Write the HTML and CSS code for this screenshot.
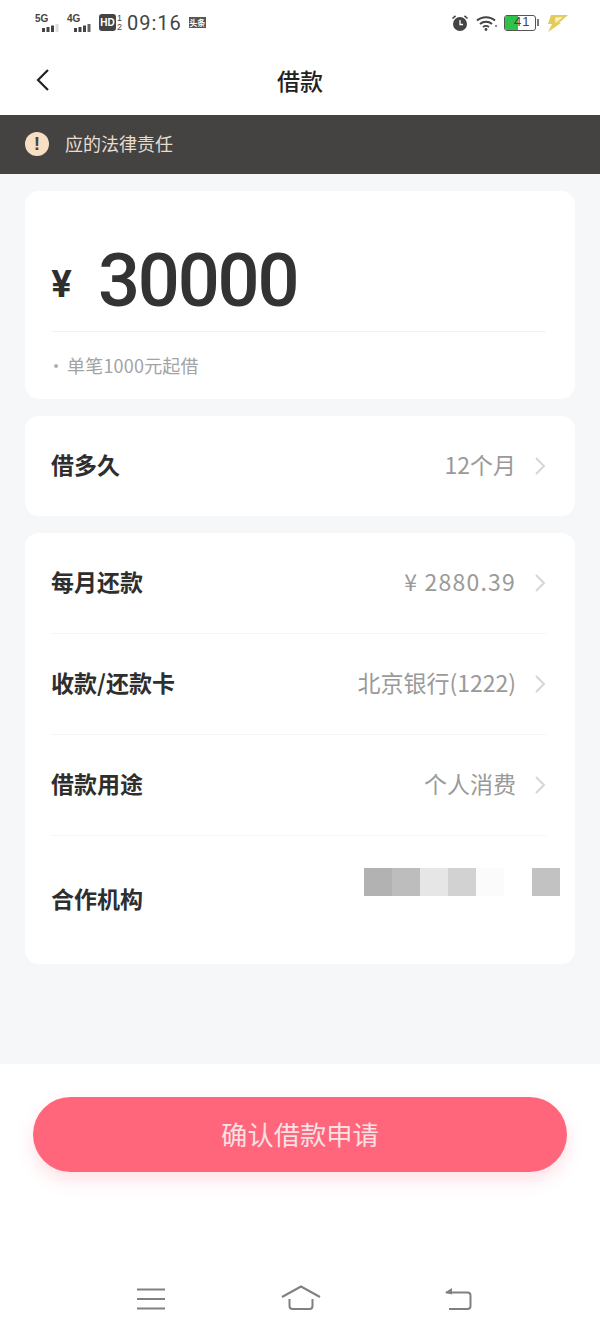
FILE: index.html
```html
<!DOCTYPE html>
<html lang="zh-CN">
<head>
    <meta charset="UTF-8">
    <meta name="viewport" content="width=device-width, initial-scale=1.0">
    <title>借款</title>
    <link rel="stylesheet" href="styles.css">
</head>
<body>

<div class="page">
    <!-- Status bar -->
    <div class="status-bar">
        <div class="status-left">
            <div class="signal">
                <span class="signal-name">5G</span>
                <svg width="20" height="8" viewBox="0 0 20 8"><rect x="1" y="4" width="3" height="4" fill="#444"/><rect x="5.5" y="3" width="3" height="5" fill="#444"/><rect x="10" y="1.5" width="3" height="6.5" fill="#444"/><rect x="14.5" y="0" width="3" height="8" fill="#ddd"/></svg>
            </div>
            <div class="signal">
                <span class="signal-name">4G</span>
                <svg width="20" height="8" viewBox="0 0 20 8"><rect x="1" y="4" width="3" height="4" fill="#444"/><rect x="5.5" y="3" width="3" height="5" fill="#444"/><rect x="10" y="1.5" width="3" height="6.5" fill="#444"/><rect x="14.5" y="0" width="3" height="8" fill="#666"/></svg>
            </div>
            <span class="hd-badge">HD</span>
            <span class="hd-nums"><span>1</span><span>2</span></span>
            <span class="clock">09:16</span>
            <span class="app-badge">头条</span>
        </div>
        <div class="status-right">
            <svg width="18" height="18" viewBox="0 0 18 18">
                <path d="M1.5 4.5 L4.5 1.8 M16.5 4.5 L13.5 1.8" stroke="#444" stroke-width="1.6" fill="none"/>
                <circle cx="9" cy="10" r="7" fill="#444"/>
                <path d="M9 6 V10.5 H12" stroke="#fff" stroke-width="1.3" fill="none"/>
            </svg>
            <svg class="wifi" width="21" height="16" viewBox="0 0 21 16">
                <path d="M1 5.5 C6 1 14 1 19 5.5" stroke="#444" stroke-width="2" fill="none"/>
                <path d="M4 9 C7.5 6 12.5 6 16 9" stroke="#444" stroke-width="2" fill="none"/>
                <path d="M7 12 C9 10.5 11 10.5 13 12" stroke="#444" stroke-width="1.8" fill="none"/>
                <circle cx="10" cy="14.5" r="1.4" fill="#444"/>
                <circle cx="20" cy="11" r="1" fill="#666"/>
            </svg>
            <div class="battery">
                <div class="battery-body">
                    <div class="battery-level"></div>
                    <span class="battery-num">41</span>
                </div>
                <div class="battery-cap"></div>
            </div>
            <svg width="22" height="18" viewBox="0 0 22 18">
                <path d="M5 1 H22 L13 9 H15 L2 18 L6 10 H2 Z" fill="#e2cb58"/>
                <path d="M9 3.5 L17 3 L9.5 9 Z" fill="#fbf3c4"/>
            </svg>
        </div>
    </div>

    <!-- Title -->
    <div class="nav-bar">
        <svg class="nav-back" width="14" height="24" viewBox="0 0 14 24">
            <path d="M12 2 L2 12 L12 22" stroke="#222" stroke-width="2.2" fill="none"/>
        </svg>
        <h1 class="nav-title">借款</h1>
    </div>

    <!-- Notice -->
    <div class="notice">
        <span class="notice-icon">!</span>
        <span class="notice-text">应的法律责任</span>
    </div>

    <div class="content">
        <div class="card amount-card">
            <div class="amount-line">
                <span class="amount-sign">¥</span>
                <span class="amount-value">30000</span>
            </div>
            <div class="amount-tip"><span class="tip-dot">·</span>单笔1000元起借</div>
        </div>

        <div class="card">
            <div class="row">
                <span class="row-label">借多久</span>
                <span class="row-value">12个月</span>
                <svg class="chevron" width="12" height="20" viewBox="0 0 12 20"><path d="M2 2 L10 10 L2 18" stroke="#d6d6d6" stroke-width="2" fill="none"/></svg>
            </div>
        </div>

        <div class="card">
            <div class="row row-line">
                <span class="row-label">每月还款</span>
                <span class="row-value money">¥ 2880.39</span>
                <svg class="chevron" width="12" height="20" viewBox="0 0 12 20"><path d="M2 2 L10 10 L2 18" stroke="#d6d6d6" stroke-width="2" fill="none"/></svg>
            </div>
            <div class="row row-line">
                <span class="row-label">收款/还款卡</span>
                <span class="row-value">北京银行(1222)</span>
                <svg class="chevron" width="12" height="20" viewBox="0 0 12 20"><path d="M2 2 L10 10 L2 18" stroke="#d6d6d6" stroke-width="2" fill="none"/></svg>
            </div>
            <div class="row row-line">
                <span class="row-label">借款用途</span>
                <span class="row-value">个人消费</span>
                <svg class="chevron" width="12" height="20" viewBox="0 0 12 20"><path d="M2 2 L10 10 L2 18" stroke="#d6d6d6" stroke-width="2" fill="none"/></svg>
            </div>
            <div class="row row-last">
                <span class="row-label">合作机构</span>
                <div class="mosaic">
                    <span class="m1"></span><span class="m2"></span><span class="m3"></span><span class="m4"></span><span class="m5"></span><span class="m6"></span><span class="m7"></span>
                </div>
            </div>
        </div>
    </div>

    <div class="footer">
        <button type="button" class="confirm-btn">确认借款申请</button>
    </div>

    <!-- Navigation keys -->
    <div class="keys">
        <svg width="30" height="24" viewBox="0 0 30 24">
            <path d="M1 2.5 H29 M1 12 H29 M1 21.5 H29" stroke="#808080" stroke-width="2" fill="none"/>
        </svg>
        <svg class="key-home" width="40" height="26" viewBox="0 0 40 26">
            <path d="M1 12 L20 1.5 L39 12" stroke="#808080" stroke-width="2" fill="none"/>
            <path d="M8.5 14 V21 Q8.5 24 11.5 24 H28.5 Q31.5 24 31.5 21 V14" stroke="#808080" stroke-width="2" fill="none"/>
        </svg>
        <svg class="key-back" width="30" height="24" viewBox="0 0 30 24">
            <path d="M3 5.5 H24.5 Q27.5 5.5 27.5 8.5 V19 Q27.5 22 24.5 22 H6" stroke="#808080" stroke-width="2" fill="none"/>
            <path d="M9 1 L2 5.5 L9 7.5 Z" fill="#808080"/>
        </svg>
    </div>
</div>

</body>
</html>
```

FILE: styles.css
```css
* {
    box-sizing: border-box;
}

body {
    margin: 0;
    background: #fff;
    font-family: "Noto Sans CJK SC", "Noto Sans", sans-serif;
    color: #333;
}

.page {
    width: 600px;
    height: 1333px;
    display: flex;
    flex-direction: column;
    overflow: hidden;
}

/* Status bar */
.status-bar {
    height: 47px;
    padding: 0 32px 2px 35px;
    display: flex;
    justify-content: space-between;
    align-items: center;
}

.status-left,
.status-right {
    display: flex;
    align-items: center;
}

.signal {
    width: 32px;
    display: flex;
    flex-direction: column;
    font-family: "Liberation Sans", sans-serif;
    font-size: 10px;
    font-weight: bold;
    line-height: 10px;
    color: #444;
}

.signal svg {
    margin-left: 6px;
}

.hd-badge {
    width: 17px;
    height: 17px;
    background: #444;
    border-radius: 3px;
    color: #fff;
    font-family: "Liberation Sans", sans-serif;
    font-size: 10px;
    font-weight: bold;
    line-height: 17px;
    text-align: center;
}

.hd-nums {
    width: 7px;
    margin-left: 1px;
    display: flex;
    flex-direction: column;
    font-family: "Liberation Sans", sans-serif;
    font-size: 9px;
    line-height: 9px;
    color: #444;
}

.clock {
    margin-left: 3px;
    font-family: "Roboto", sans-serif;
    font-size: 20px;
    letter-spacing: 1px;
    color: #444;
}

.app-badge {
    width: 17px;
    height: 11px;
    margin-left: 7px;
    background: #555;
    color: #fff;
    font-size: 8px;
    font-weight: 700;
    line-height: 11px;
    text-align: center;
    white-space: nowrap;
    overflow: hidden;
}

.status-right {
    gap: 7px;
}

.battery {
    display: flex;
    align-items: center;
}

.battery-body {
    width: 32px;
    height: 16px;
    border: 1.5px solid #555;
    border-radius: 3px;
    display: flex;
    position: relative;
    overflow: hidden;
}

.battery-level {
    width: 13px;
    background: #2fc24a;
}

.battery-num {
    position: absolute;
    left: 9px;
    top: -2px;
    font-family: "Liberation Sans", sans-serif;
    font-size: 13px;
    line-height: 16px;
    letter-spacing: 1px;
    color: #444;
}

.battery-cap {
    width: 2px;
    height: 7px;
    margin-left: 1px;
    background: #777;
}

/* Title */
.nav-bar {
    height: 68px;
    padding-bottom: 3px;
    position: relative;
    display: flex;
    justify-content: center;
    align-items: center;
}

.nav-back {
    position: absolute;
    left: 36px;
    top: 21px;
}

.nav-title {
    margin: 0;
    font-size: 23px;
    font-weight: 500;
    color: #222;
}

/* Notice */
.notice {
    height: 59px;
    padding: 0 0 2px 25px;
    background: #444342;
    display: flex;
    align-items: center;
}

.notice-icon {
    width: 24px;
    height: 24px;
    border-radius: 50%;
    background: #f8dfc4;
    color: #4a4440;
    font-family: "Liberation Sans", sans-serif;
    font-size: 19px;
    font-weight: bold;
    line-height: 24px;
    text-align: center;
}

.notice-text {
    margin: 0 0 2px 16px;
    font-size: 18px;
    color: #e6dccf;
}

/* Cards */
.content {
    height: 890px;
    padding: 17px 25px 0;
    background: #f6f7f9;
    display: flex;
    flex-direction: column;
    gap: 17px;
}

.card {
    background: #fff;
    border-radius: 14px;
    padding: 0 29px 0 26px;
}

.amount-card {
    height: 208px;
}

.amount-line {
    height: 141px;
    padding-top: 38px;
    border-bottom: 1px solid #f3f3f3;
    display: flex;
    align-items: center;
}

.amount-sign {
    width: 47px;
    margin-top: 6px;
    font-family: "Inter", sans-serif;
    font-size: 37px;
    font-weight: 700;
    color: #2e2e2e;
}

.amount-value {
    font-family: "Roboto", sans-serif;
    font-size: 74px;
    font-weight: 500;
    letter-spacing: -2.2px;
    color: #333;
}

.amount-tip {
    margin-top: 20px;
    font-size: 18px;
    line-height: 26px;
    letter-spacing: 0.2px;
    color: #a3a3a3;
}

.tip-dot {
    width: 16px;
    margin-left: -4px;
    padding-right: 4px;
    display: inline-block;
    box-sizing: content-box;
    color: #aaa;
}

.row {
    height: 100px;
    display: flex;
    align-items: center;
}

.row-line {
    height: 101px;
    border-bottom: 1px solid #f5f5f5;
}

.row-last {
    height: 128px;
    border-bottom: 0;
}

.row-label {
    flex: 1;
    margin-bottom: 4px;
    font-size: 23px;
    font-weight: 700;
    color: #2e2e2e;
}

.row-value {
    margin-bottom: 4px;
    font-size: 23px;
    color: #9a9a9a;
}

.row-value.money {
    letter-spacing: 1.2px;
}

.chevron {
    margin-left: 18px;
}

.mosaic {
    margin: -36px -14px 0 0;
    display: flex;
}

.mosaic span {
    width: 28px;
    height: 28px;
}

.mosaic .m1 { background: #b2b2b2; }
.mosaic .m2 { background: #bdbdbd; }
.mosaic .m3 { background: #e6e6e6; }
.mosaic .m4 { background: #d2d2d2; }
.mosaic .m5 { background: #fbfbfb; }
.mosaic .m6 { background: #fff; }
.mosaic .m7 { background: #c2c2c2; }

/* Footer */
.footer {
    height: 170px;
    padding: 33px 33px 0;
    background: #fff;
}

.confirm-btn {
    width: 100%;
    height: 75px;
    padding-bottom: 4px;
    border: none;
    border-radius: 38px;
    background: #ff667c;
    box-shadow: 0 8px 18px rgba(255, 102, 124, 0.2);
    color: #f8e0e3;
    font-family: inherit;
    font-size: 26.3px;
    cursor: pointer;
}

/* Navigation keys */
.keys {
    height: 99px;
    padding: 0 0 22px 136px;
    background: #fff;
    display: flex;
    align-items: flex-end;
}

.key-home {
    margin-left: 115px;
}

.key-back {
    margin-left: 122px;
}
```
